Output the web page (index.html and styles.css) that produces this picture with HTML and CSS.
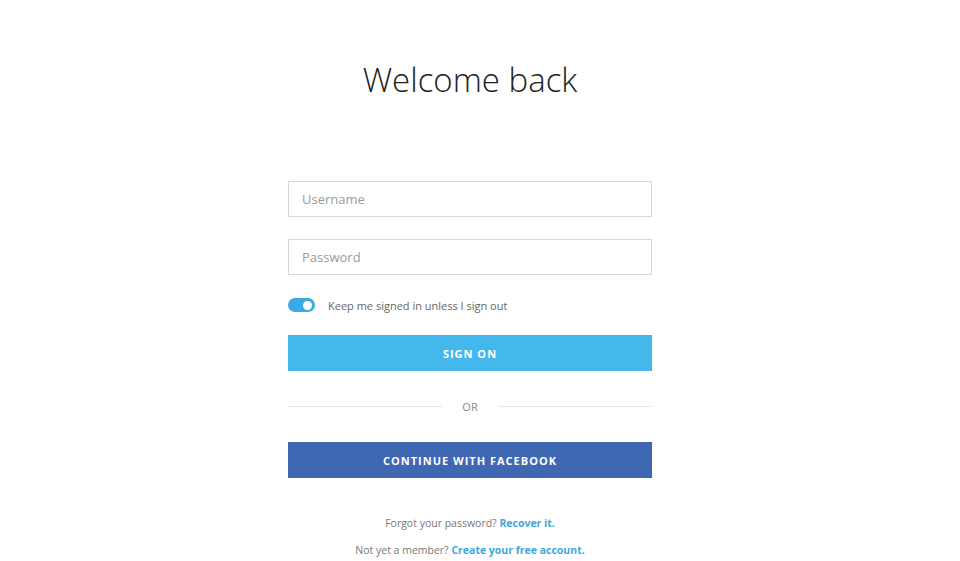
FILE: index.html
```html
<!DOCTYPE html>
<html lang="en">
<head>
  <meta charset="UTF-8" />
  <title>Welcome back</title>
  <link rel="stylesheet" href="styles.css">
</head>
<body>
  <main class="page">
    <h1 class="title">Welcome back</h1>

    <form class="login">
      <input type="text" class="field" placeholder="Username">
      <input type="password" class="field" placeholder="Password">

      <label class="remember">
        <span class="toggle"><span class="knob"></span></span>
        Keep me signed in unless I sign out
      </label>

      <button type="button" class="btn primary">SIGN ON</button>

      <div class="divider"><span>OR</span></div>

      <button type="button" class="btn facebook">CONTINUE WITH FACEBOOK</button>
    </form>

    <p class="note">Forgot your password? <a href="#">Recover it.</a></p>
    <p class="note">Not yet a member? <a href="#">Create your free account.</a></p>
  </main>
</body>
</html>
```

FILE: styles.css
```css
* {
  margin: 0;
  padding: 0;
  box-sizing: border-box;
}

body {
  font-family: 'Open Sans', 'Liberation Sans', sans-serif;
  background: #fff;
  color: #333;
}

.page {
  width: 940px;
  display: flex;
  flex-direction: column;
  align-items: center;
  padding-top: 56px;
}

.title {
  font-size: 33px;
  font-weight: 300;
  color: #222;
  line-height: 48px;
  margin-bottom: 77px;
}

.login {
  width: 364px;
  display: flex;
  flex-direction: column;
}

.field {
  height: 36px;
  border: 1px solid #d4d8db;
  padding: 0 13px;
  font-family: inherit;
  font-size: 13px;
  color: #555;
  outline: none;
  margin-bottom: 22px;
}

.field::placeholder {
  color: #9a9a9a;
}

.remember {
  display: flex;
  align-items: center;
  gap: 13px;
  font-size: 11px;
  color: #666;
  margin-bottom: 22px;
  height: 16px;
}

.toggle {
  width: 27px;
  height: 14px;
  border-radius: 7px;
  background: #3aa9e4;
  display: flex;
  align-items: center;
  justify-content: flex-end;
  padding-right: 3px;
}

.knob {
  width: 9px;
  height: 9px;
  border-radius: 50%;
  background: #fff;
}

.btn {
  height: 36px;
  border: none;
  color: #fff;
  font-family: inherit;
  font-size: 11px;
  font-weight: 700;
  letter-spacing: 1px;
  cursor: pointer;
}

.btn.primary {
  background: #44b7ed;
}

.btn.facebook {
  background: #3f67b2;
}

.divider {
  display: flex;
  align-items: center;
  gap: 20px;
  height: 71px;
  font-size: 11px;
  color: #888;
}

.divider::before,
.divider::after {
  content: '';
  flex: 1;
  height: 1px;
  background: #e6e6e6;
}

.note {
  font-size: 10.5px;
  color: #777;
  line-height: 14px;
}

.note:first-of-type {
  margin-top: 38px;
  margin-bottom: 13px;
}

.note a {
  color: #3ea8df;
  font-weight: 700;
  text-decoration: none;
}
```
